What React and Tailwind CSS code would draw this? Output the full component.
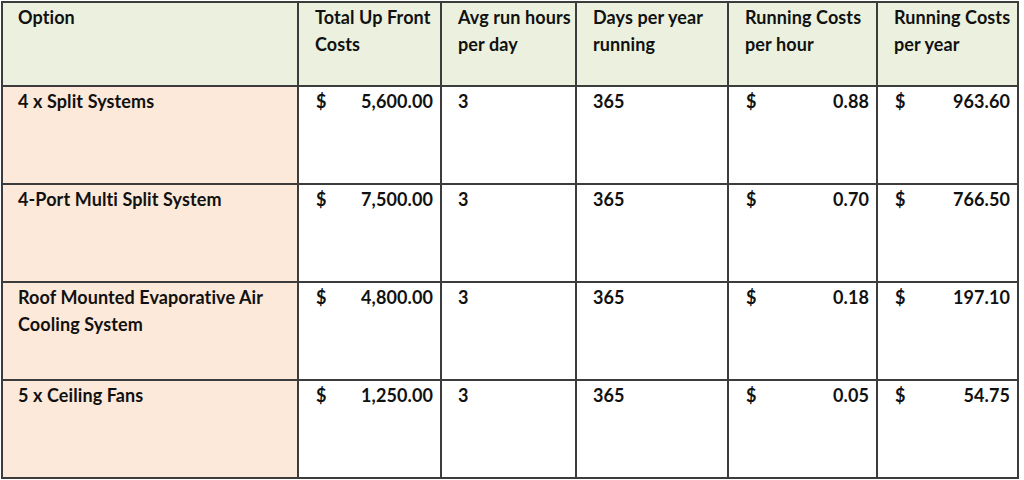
import React from 'react';

const headers = [
    'Option',
    'Total Up Front Costs',
    'Avg run hours per day',
    'Days per year running',
    'Running Costs per hour',
    'Running Costs per year',
];

const rows = [
    { option: '4 x Split Systems', upfront: '5,600.00', hours: '3', days: '365', perHour: '0.88', perYear: '963.60' },
    { option: '4-Port Multi Split System', upfront: '7,500.00', hours: '3', days: '365', perHour: '0.70', perYear: '766.50' },
    { option: 'Roof Mounted Evaporative Air Cooling System', upfront: '4,800.00', hours: '3', days: '365', perHour: '0.18', perYear: '197.10' },
    { option: '5 x Ceiling Fans', upfront: '1,250.00', hours: '3', days: '365', perHour: '0.05', perYear: '54.75' },
];

const Money = ({ value }) => (
    <div className="bg-white pl-[17px] pr-[7px] pt-[1px] flex justify-between">
        <span>$</span>
        <span>{value}</span>
    </div>
);

const App = () => {
    return (
        <div className="w-[1024px] h-[480px] bg-white pl-[1px] pt-[1px]">
            <div
                className="inline-grid grid-cols-[294px_141px_133px_150px_147px_139px] grid-rows-[82px_96px_96px_96px_96px] gap-[2px] p-[2px] bg-[#3c3c3c] text-[#111] font-bold text-[18px] leading-[27px] tracking-[0.1px]"
                style={{ fontFamily: 'Lato, "Open Sans", sans-serif' }}
            >
                {headers.map((h, i) => (
                    <div key={h} className={`bg-[#ebf1de] pt-[1px] ${i === 0 ? 'pl-[15px]' : 'pl-[16px]'} pr-[2px]`}>
                        {h}
                    </div>
                ))}
                {rows.map((r) => (
                    <React.Fragment key={r.option}>
                        <div className="bg-[#fde9d9] pl-[15px] pr-[6px] pt-[1px]">{r.option}</div>
                        <Money value={r.upfront} />
                        <div className="bg-white pl-[16px] pt-[1px]">{r.hours}</div>
                        <div className="bg-white pl-[16px] pt-[1px]">{r.days}</div>
                        <Money value={r.perHour} />
                        <Money value={r.perYear} />
                    </React.Fragment>
                ))}
            </div>
        </div>
    );
};

export default App;
